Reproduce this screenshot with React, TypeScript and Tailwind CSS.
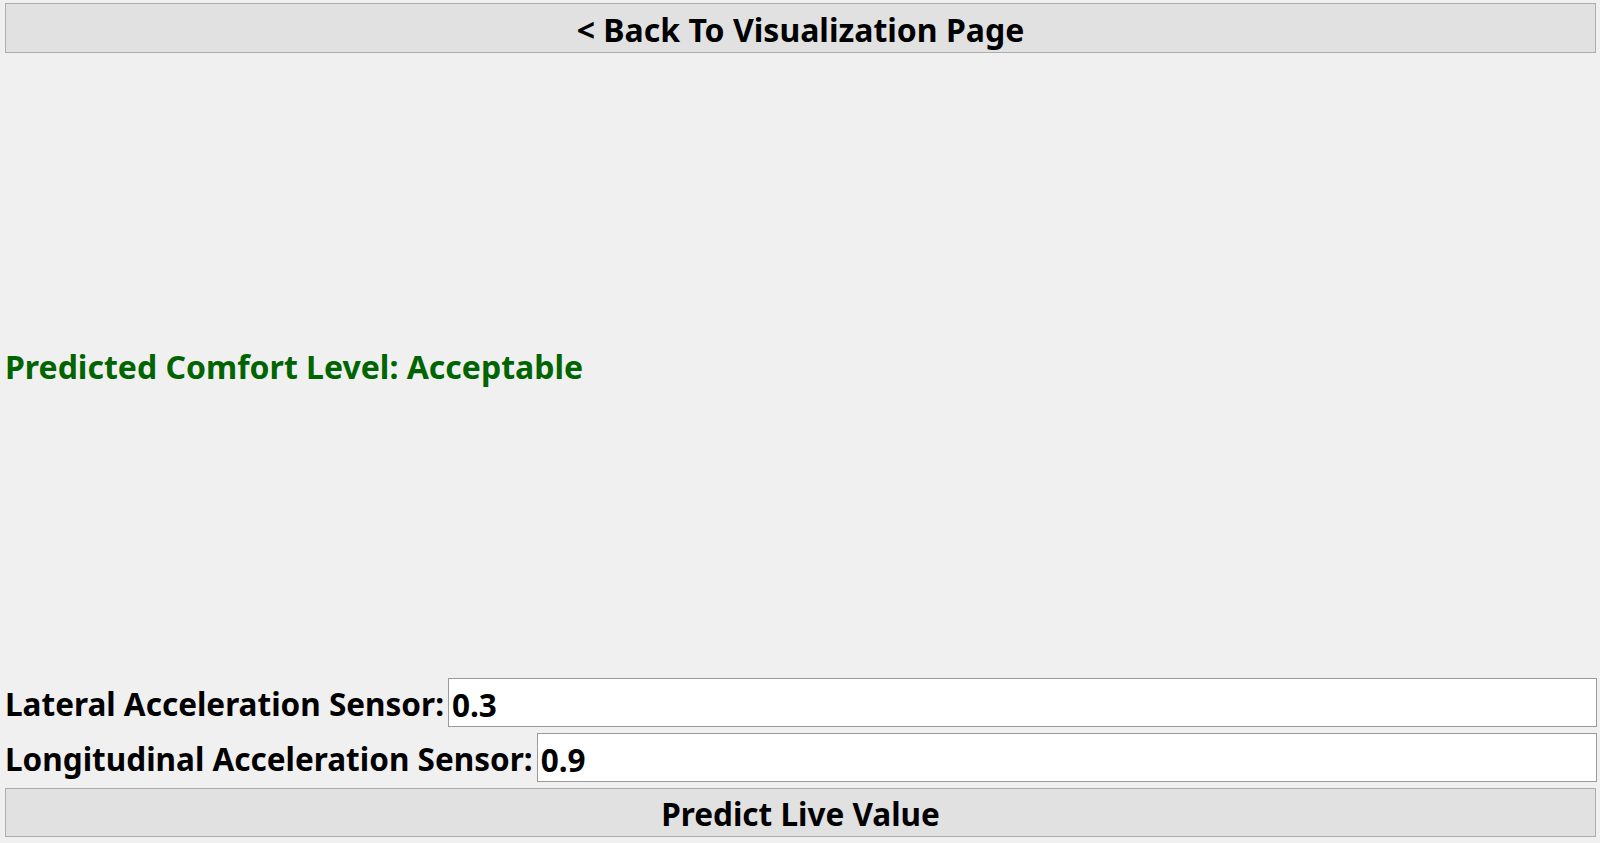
import { useState } from "react";

const FONT = { fontFamily: '"Noto Sans", "Open Sans", sans-serif' };

function SensorRow({
  label,
  value,
  onChange,
}: {
  label: string;
  value: string;
  onChange: (v: string) => void;
}) {
  return (
    <div className="flex items-center h-[49px] pl-[5px] pr-[3px]">
      <label className="text-[31.5px] font-bold text-black whitespace-nowrap leading-none pt-[3px] mr-[4px]">
        {label}
      </label>
      <input
        type="text"
        value={value}
        onChange={(e) => onChange(e.target.value)}
        className="flex-1 h-full min-w-0 bg-white border border-[#9a9a9a] pl-[3px] pt-[3px] text-[31.5px] font-bold text-black outline-none"
        style={FONT}
      />
    </div>
  );
}

export default function App() {
  const [lateral, setLateral] = useState("0.3");
  const [longitudinal, setLongitudinal] = useState("0.9");

  return (
    <div className="h-[843px] w-full bg-[#f0f0f0] flex flex-col overflow-hidden" style={FONT}>
      <div className="pt-[3px] pl-[5px] pr-[4px]">
        <button
          type="button"
          className="w-full h-[50px] pt-[3px] bg-[#e1e1e1] border border-[#adadad] text-[32px] font-bold text-black leading-none"
          style={FONT}
        >
          &lt; Back To Visualization Page
        </button>
      </div>

      <div className="flex-1 flex items-center pl-[5px]">
        <span className="text-[32px] font-bold text-[#006400] leading-none pt-[3px]">
          Predicted Comfort Level: Acceptable
        </span>
      </div>

      <div className="flex flex-col gap-[6px] pb-[6px]">
        <SensorRow label="Lateral Acceleration Sensor:" value={lateral} onChange={setLateral} />
        <SensorRow label="Longitudinal Acceleration Sensor:" value={longitudinal} onChange={setLongitudinal} />
        <div className="pl-[5px] pr-[4px]">
          <button
            type="button"
            className="w-full h-[49px] pt-[3px] bg-[#e1e1e1] border border-[#adadad] text-[31.5px] font-bold text-black leading-none"
            style={FONT}
          >
            Predict Live Value
          </button>
        </div>
      </div>
    </div>
  );
}
